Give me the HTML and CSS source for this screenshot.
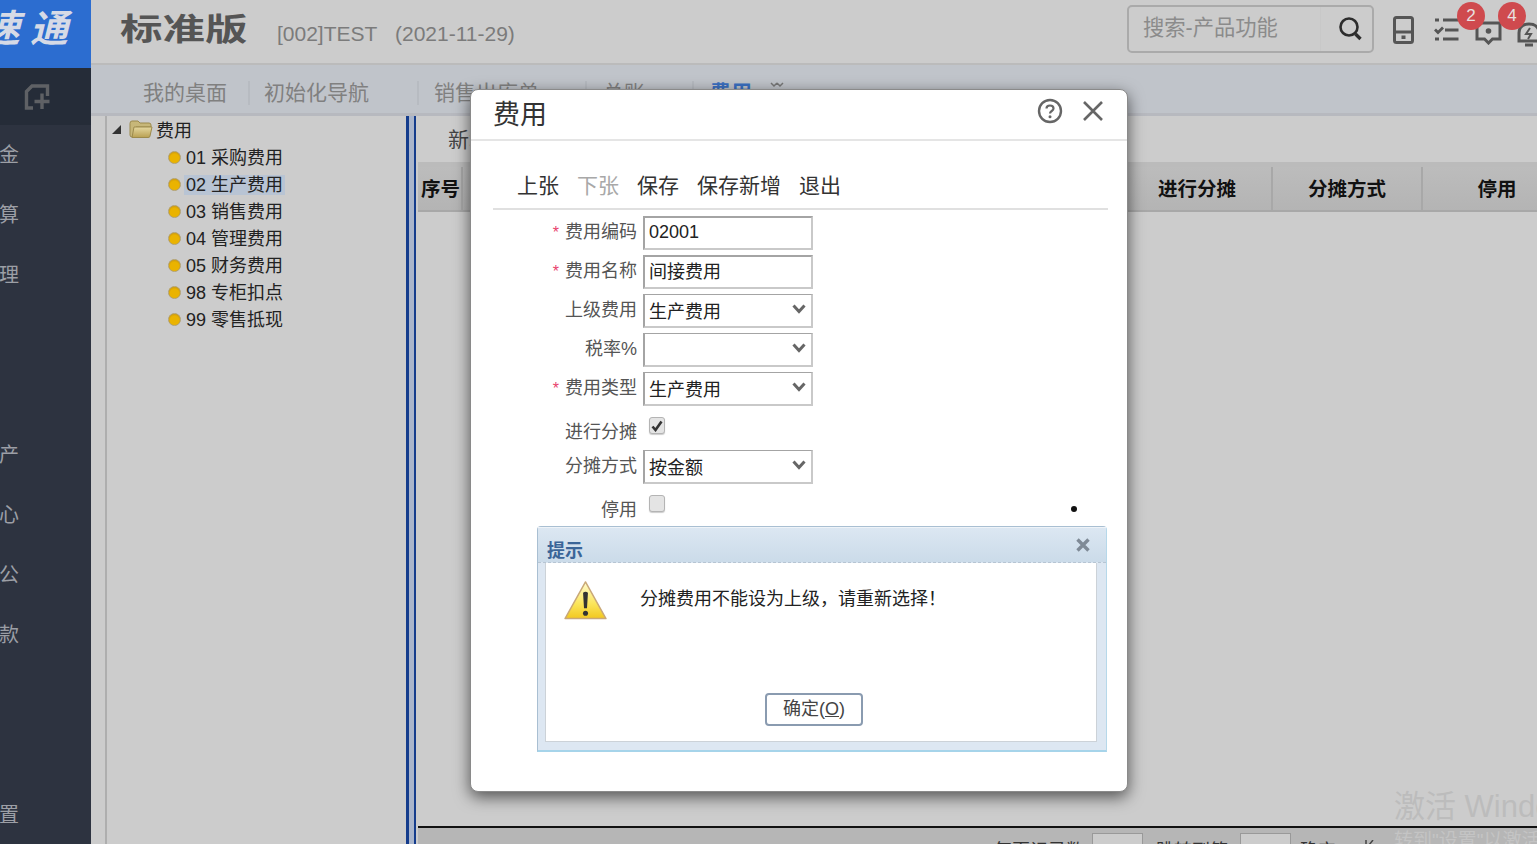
FILE: index.html
```html
<!DOCTYPE html>
<html lang="zh-CN">
<head>
<meta charset="utf-8">
<title>费用</title>
<link rel="stylesheet" href="styles.css">
</head>
<body>
<div class="app">
  <aside class="sidebar">
    <div class="logo"><span class="logo-text">速通</span></div>
    <div class="add-band">
      <svg class="add-icon" width="26" height="26" viewBox="0 0 26 26" fill="none" stroke="#5f6165" stroke-width="3.4">
        <path d="M9 24H2.500V7.500L8 2H23.500V12"/><path d="M18 9.500V25M10.500 17.500H25.500"/>
      </svg>
    </div>
    <nav class="nav">
      <div class="nav-item">金</div>
      <div class="nav-item">算</div>
      <div class="nav-item">理</div>
      <div class="nav-item"></div>
      <div class="nav-item"></div>
      <div class="nav-item">产</div>
      <div class="nav-item">心</div>
      <div class="nav-item">公</div>
      <div class="nav-item">款</div>
      <div class="nav-item"></div>
      <div class="nav-item"></div>
      <div class="nav-item">置</div>
    </nav>
  </aside>
  <div class="main">
    <header class="topbar">
      <div class="brand"><span class="brand-text">标准版</span></div>
      <div class="company">[002]TEST</div>
      <div class="date">(2021-11-29)</div>
      <div class="search">
        <div class="search-text">搜索-产品功能</div>
        <div class="search-btn">
          <svg width="28" height="28" viewBox="0 0 28 28" fill="none" stroke="#2d2d2d">
            <circle cx="12" cy="12" r="8.500" stroke-width="2.600"/><path d="M18.500 19l5 5" stroke-width="3.400"/>
          </svg>
        </div>
      </div>
      <div class="top-icons">
        <div class="top-icon">
          <svg width="21" height="28" viewBox="0 0 21 28" fill="none" stroke="#555" stroke-width="3">
            <rect x="1.500" y="1.500" width="18" height="25" rx="2"/><path d="M2 16H19"/><rect x="8.500" y="19.500" width="4" height="3.500" fill="#555" stroke="none"/>
          </svg>
        </div>
        <div class="top-icon">
          <svg width="25" height="26" viewBox="0 0 25 26" fill="none" stroke="#555" stroke-width="3">
            <path d="M1 4H5M9 4H24.500M11 14H24.500M1 23H5M9 23H24.500"/><path d="M1 13.500l3 3 5-5" stroke-width="2.800"/>
          </svg>
        </div>
        <div class="top-icon top-icon-low">
          <svg width="27" height="24" viewBox="0 0 27 24" fill="none" stroke="#555" stroke-width="3">
            <path d="M2 2H25V18H17.500L13.500 22 9.500 18H2Z"/><circle cx="13.500" cy="10" r="2.800" fill="#555" stroke="none"/>
          </svg>
          <span class="badge">2</span>
        </div>
        <div class="top-icon top-icon-low">
          <svg width="26" height="30" viewBox="0 0 26 30" fill="none" stroke="#555" stroke-width="3">
            <path d="M3 20V12C3 6 7 3 13 3S23 6 23 12V20ZM9 24H17"/><path d="M14 7l-4 6h5l-3 5" stroke-width="2"/>
          </svg>
          <span class="badge">4</span>
        </div>
      </div>
    </header>
    <div class="tabs">
      <div class="tab">我的桌面</div>
      <div class="tab">初始化导航</div>
      <div class="tab">销售出库单</div>
      <div class="tab">总账</div>
      <div class="tab tab-active">费用</div>
      <div class="tab-more">
        <svg width="14" height="8" viewBox="0 0 14 8" fill="none" stroke="#777" stroke-width="1.500"><path d="M1 1l3 3 3-3M7 1l3 3 3-3"/></svg>
      </div>
    </div>
    <div class="workspace">
      <div class="tree">
        <div class="tree-root">
          <span class="tree-arrow"></span>
          <svg class="folder" width="24" height="20" viewBox="0 0 24 20">
            <defs><linearGradient id="fg" x1="0" y1="0" x2="0" y2="1"><stop offset="0" stop-color="#e5d8a0"/><stop offset="1" stop-color="#b9a052"/></linearGradient></defs>
            <path d="M1 4.500Q1 2 3 2H9L11 4H20Q22 4 22 6V8H7L4 18H3Q1 18 1 16Z" fill="#c7b779" stroke="#9c8a4c"/>
            <path d="M5 8H23L21 17Q21 18.500 19 18.500H3Z" fill="url(#fg)" stroke="#9c8a4c"/>
          </svg>
          <span>费用</span>
        </div>
        <div class="tree-item"><span class="dot"></span><span class="tree-label">01 采购费用</span></div>
        <div class="tree-item"><span class="dot"></span><span class="tree-label tree-selected">02 生产费用</span></div>
        <div class="tree-item"><span class="dot"></span><span class="tree-label">03 销售费用</span></div>
        <div class="tree-item"><span class="dot"></span><span class="tree-label">04 管理费用</span></div>
        <div class="tree-item"><span class="dot"></span><span class="tree-label">05 财务费用</span></div>
        <div class="tree-item"><span class="dot"></span><span class="tree-label">98 专柜扣点</span></div>
        <div class="tree-item"><span class="dot"></span><span class="tree-label">99 零售抵现</span></div>
      </div>
      <div class="splitter"></div>
      <div class="content">
        <div class="content-toolbar">新增</div>
        <div class="grid-head">
          <div class="cell cell-no">序号</div>
          <div class="cell cell-fill"></div>
          <div class="cell cell-col">进行分摊</div>
          <div class="cell cell-col">分摊方式</div>
          <div class="cell cell-col">停用</div>
        </div>
        <div class="grid-body"></div>
        <div class="pager">
          <span class="pager-label">每页记录数</span><span class="pager-input"></span>
          <span class="pager-label pager-jump">跳转到第</span><span class="pager-input"></span>
          <span class="pager-label pager-ok">确定</span>
          <svg class="pager-first" width="10" height="10" viewBox="0 0 10 10" fill="none" stroke="#444" stroke-width="1.500"><path d="M1 0V10M8 0L4 5"/></svg>
        </div>
      </div>
    </div>
  </div>
</div>

<div class="watermark">
  <div class="wm-title">激活 Windows</div>
  <div class="wm-sub">转到"设置"以激活 Windows。</div>
</div>

<section class="dialog">
  <div class="dialog-head">
    <div class="dialog-title">费用</div>
    <svg class="help-icon" width="26" height="26" viewBox="0 0 26 26" fill="none" stroke="#666">
      <circle cx="13" cy="13" r="11" stroke-width="2.400"/>
      <path d="M9.500 10.500C9.500 8.500 11 7.500 13 7.500S16.500 8.700 16.500 10.400C16.500 13 13 13 13 15.500" stroke-width="2.200"/>
      <circle cx="13" cy="18.800" r="1.500" fill="#666" stroke="none"/>
    </svg>
    <svg class="close-icon" width="22" height="22" viewBox="0 0 22 22" fill="none" stroke="#666" stroke-width="2.600"><path d="M2 2L20 20M20 2L2 20"/></svg>
  </div>
  <div class="dialog-tools">
    <span class="tool">上张</span>
    <span class="tool tool-off">下张</span>
    <span class="tool">保存</span>
    <span class="tool">保存新增</span>
    <span class="tool">退出</span>
  </div>
  <div class="form">
    <div class="label"><i class="req">*</i>费用编码</div>
    <div class="field">02001</div>
    <div class="label"><i class="req">*</i>费用名称</div>
    <div class="field field-low">间接费用</div>
    <div class="label">上级费用</div>
    <div class="field field-select">生产费用<span class="chev"><svg width="14" height="10" viewBox="0 0 14 10" fill="none" stroke="#666" stroke-width="3"><path d="M1.500 1.500L7 7.500L12.500 1.500"/></svg></span></div>
    <div class="label">税率%</div>
    <div class="field field-select"><span class="chev"><svg width="14" height="10" viewBox="0 0 14 10" fill="none" stroke="#666" stroke-width="3"><path d="M1.500 1.500L7 7.500L12.500 1.500"/></svg></span></div>
    <div class="label"><i class="req">*</i>费用类型</div>
    <div class="field field-select">生产费用<span class="chev"><svg width="14" height="10" viewBox="0 0 14 10" fill="none" stroke="#666" stroke-width="3"><path d="M1.500 1.500L7 7.500L12.500 1.500"/></svg></span></div>
    <div class="label label-tall">进行分摊</div>
    <div class="check-wrap"><span class="check"><svg width="12" height="12" viewBox="0 0 12 12" fill="none" stroke="#333" stroke-width="2.600"><path d="M1.500 6.500L4.500 10L10.500 1.500"/></svg></span></div>
    <div class="label">分摊方式</div>
    <div class="field field-select">按金额<span class="chev"><svg width="14" height="10" viewBox="0 0 14 10" fill="none" stroke="#666" stroke-width="3"><path d="M1.500 1.500L7 7.500L12.500 1.500"/></svg></span></div>
    <div class="label label-tall">停用</div>
    <div class="check-wrap"><span class="check"></span></div>
  </div>
  <span class="stray-dot"></span>
  <div class="msgbox">
    <div class="msg-head">
      <span class="msg-title">提示</span>
      <svg class="msg-close" width="14" height="14" viewBox="0 0 14 14" fill="none" stroke="#7f8a96" stroke-width="3.400"><path d="M1.500 1.500L12.500 12.500M12.500 1.500L1.500 12.500"/></svg>
    </div>
    <div class="msg-body">
      <div class="msg-row">
        <svg class="warn" width="43" height="39" viewBox="0 0 44 40">
          <defs><linearGradient id="wg" x1="0" y1="0" x2="0" y2="1"><stop offset="0" stop-color="#fffbd0"/><stop offset="0.600" stop-color="#fbe55a"/><stop offset="1" stop-color="#f2c81e"/></linearGradient></defs>
          <path d="M22 1L43 38.500H1Z" fill="url(#wg)" stroke="#c9a877" stroke-width="1.500" stroke-linejoin="round"/>
          <path d="M19.500 12Q22 10 24.500 12L23.500 28H20.500Z" fill="#333"/>
          <circle cx="22" cy="33" r="2.600" fill="#333"/>
        </svg>
        <div class="msg-text">分摊费用不能设为上级，请重新选择！</div>
      </div>
      <div class="msg-actions"><div class="msg-btn">确定(<u>O</u>)</div></div>
    </div>
  </div>
</section>
</body>
</html>
```
FILE: styles.css
```css
* { box-sizing: border-box; }
html, body { margin: 0; height: 100%; overflow: hidden; }
body {
  font-family: "Liberation Sans", "Noto Sans CJK SC", sans-serif;
  background: #ccc;
  color: #222;
  position: relative;
  width: 1537px;
  height: 844px;
}
.app { display: flex; width: 1537px; height: 844px; overflow: hidden; }

/* sidebar */
.sidebar { width: 91px; flex: none; background: #2d3340; display: flex; flex-direction: column; }
.logo { height: 68px; flex: none; background: #2c6dd0; display: flex; justify-content: flex-end; align-items: center; padding: 0 13px 11px 0; overflow: hidden; }
.logo-text { font-size: 38px; line-height: 50px; font-weight: 700; font-style: italic; color: #d6dae6; white-space: nowrap; letter-spacing: 10px; flex: none; }
.add-band { height: 57px; flex: none; background: #252c38; display: flex; align-items: center; padding-left: 24px; }
.nav { display: flex; flex-direction: column; }
.nav-item { width: 19px; height: 60px; line-height: 60px; font-size: 20px; color: #9c9fa6; display: flex; justify-content: flex-end; white-space: nowrap; }

/* main */
.main { flex: 1; min-width: 0; display: flex; flex-direction: column; }
.topbar { height: 65px; flex: none; display: flex; align-items: flex-start; padding-left: 29px; border-bottom: 2px solid #bbb; background: #ccc; }
.brand { flex: none; width: 128px; line-height: 60px; white-space: nowrap; }
.brand-text { display: inline-block; font-size: 31px; font-weight: 700; color: #555; transform: scaleX(1.37); transform-origin: left center; }
.company { flex: none; font-size: 21px; color: #7b7b7b; line-height: 68px; margin-left: 29px; width: 118px; }
.date { flex: none; font-size: 21px; color: #7b7b7b; line-height: 68px; width: 732px; }
.search { flex: none; width: 247px; height: 48px; margin-top: 5px; border: 2px solid #aaa; border-radius: 5px; display: flex; }
.search-text { width: 192px; padding-left: 14px; font-size: 21.3px; line-height: 42px; color: #8b8b8b; border-right: 1px solid #c8c8c8; white-space: nowrap; }
.search-btn { flex: 1; display: flex; align-items: center; padding-left: 16px; }
.top-icons { flex: none; display: flex; margin-left: 19px; margin-top: 16px; }
.top-icon { position: relative; width: 41px; height: 30px; flex: none; display: flex; align-items: flex-start; }
.top-icon-low { padding-top: 5px; }
.badge { position: absolute; left: -18px; top: -14px; width: 28px; height: 28px; border-radius: 50%; background: #cf4a4e; color: #e8e0e0; font-size: 17px; line-height: 28px; text-align: center; }

.tabs { height: 51px; flex: none; background: #c0c4ca; border-bottom: 3px solid #b7b9bf; display: flex; align-items: center; padding: 7px 0 0 52px; }
.tab { font-size: 21px; color: #808080; padding-right: 21px; margin-right: 14px; border-right: 2px solid #b7bbc1; line-height: 24px; white-space: nowrap; height: 24px; }
.tab:nth-child(2) { margin-right: 15px; padding-right: 48px; }
.tab:nth-child(3) { padding-right: 46px; margin-right: 16px; }
.tab:nth-child(4) { padding-right: 47px; margin-right: 16px; }
.tab-active { color: #3a6fc0; font-weight: 700; border-right: 0; padding-right: 18px; margin-right: 0; }
.tab-more { line-height: 0; margin-top: -14px; }

.workspace { flex: 1; min-height: 0; display: flex; }
.tree { width: 301px; margin-left: 14px; flex: none; border-left: 2px solid #aeaeae; padding: 0 0 0 1px; font-size: 18px; color: #222; }
.tree-root { display: flex; align-items: center; height: 26px; margin-bottom: 2px; }
.tree-arrow { width: 0; height: 0; border-style: solid; border-width: 0 0 9px 9px; border-color: transparent transparent #333 transparent; margin: 0 8px 0 4px; }
.folder { margin-right: 3px; flex: none; }
.tree-item { display: flex; align-items: center; height: 27px; padding-left: 60px; }
.dot { width: 13px; height: 13px; border-radius: 50%; flex: none; background: radial-gradient(circle at 50% 60%, #eab300 50%, #b98a18 100%); border: 1px solid #b3a06a; margin-right: 3px; }
.tree-label { padding: 0 2px; line-height: 20px; white-space: nowrap; }
.tree-selected { background: #b8c4d4; }
.splitter { width: 10px; flex: none; background: #a9b5cb; border-left: 3px solid #143c8c; border-right: 2px solid #143c8c; }
.content { flex: 1; min-width: 0; display: flex; flex-direction: column; margin-left: 2px; }
.content-toolbar { height: 46px; flex: none; padding: 9px 0 0 30px; font-size: 21px; line-height: 30px; color: #444; }
.grid-head { height: 50px; flex: none; display: flex; border-top: 5px solid #bbb; border-bottom: 2px solid #a8a8a8; background: linear-gradient(#bcbcbc, #b4b4b4); padding-left: 2px; }
.cell { font-size: 19.5px; font-weight: 700; color: #111; text-align: center; line-height: 44px; border-right: 2px solid #a8a8a8; flex: none; white-space: nowrap; }
.cell-no { width: 43px; }
.cell-fill { width: 660px; }
.cell-col { width: 150px; }
.grid-body { flex: 1; min-height: 0; }
.pager { height: 18px; flex: none; background: #b6b6b6; border-top: 2px solid #111; display: flex; align-items: flex-start; padding-left: 576px; font-size: 18px; color: #333; white-space: nowrap; overflow: hidden; }
.pager-label { flex: none; line-height: 26px; margin-top: 10px; }
.pager-input { flex: none; width: 51px; height: 30px; margin: 5px 0 0 8px; background: #ccc; border: 1px solid #999; }
.pager-jump { margin-left: 13px; margin-right: 4px; }
.pager-ok { margin-left: 9px; }
.pager-first { flex: none; margin: 12px 0 0 29px; }

.watermark { position: absolute; left: 1394px; top: 786px; white-space: nowrap; color: #bcbcbc; pointer-events: none; }
.wm-title { font-size: 31px; line-height: 42px; }
.wm-sub { font-size: 19px; line-height: 26px; color: #c4c4c4; }

/* dialog */
.dialog { position: absolute; left: 470px; top: 89px; width: 658px; height: 703px; background: #fff; border: 1px solid #8a8a8a; border-radius: 8px; box-shadow: 0 5px 16px rgba(0,0,0,.6); }
.dialog-head { height: 51px; border-bottom: 2px solid #e5e5e5; display: flex; align-items: center; padding: 0 23px 0 22px; }
.dialog-title { font-size: 27px; color: #333; flex: 1; line-height: 50px; }
.help-icon { margin: -7px 16px 0 0; }
.close-icon { margin: -8px 0 0 3px; }
.dialog-tools { margin: 0 19px 0 22px; height: 69px; border-bottom: 2px solid #e0e0e0; display: flex; align-items: flex-end; padding: 0 0 7px 24px; gap: 18px; font-size: 21px; color: #333; }
.tool { line-height: 30px; }
.tool-off { color: #a8a8a8; }
.form { display: grid; grid-template-columns: 166px 170px; column-gap: 6px; row-gap: 5px; grid-template-rows: repeat(8, 34px); margin-top: 6px; }
.label { font-size: 18px; color: #555; text-align: right; line-height: 32px; white-space: nowrap; }
.label-tall { line-height: 42px; }
.req { color: #e8436c; font-style: normal; font-size: 16px; margin-right: 6px; }
.field { position: relative; height: 34px; border: 2px solid #c9c9c9; border-top-color: #a4a4a4; border-left-color: #a4a4a4; font-size: 18px; line-height: 29px; padding-left: 4px; color: #222; white-space: nowrap; }
.field-low { line-height: 30px; }
.field-select { border-top-width: 1px; line-height: 35px; }
.chev { position: absolute; right: 0; top: 0; bottom: 0; width: 25px; display: flex; align-items: flex-start; justify-content: center; padding-top: 9px; }
.check-wrap { padding: 6px 0 0 6px; }
.check { width: 16px; height: 17px; border-radius: 3px; background: #e4e4e4; border: 1px solid #b4b4b4; box-shadow: 0 1px 1px #ccc; display: flex; align-items: center; justify-content: center; }
.stray-dot { position: absolute; left: 600px; top: 416px; width: 6px; height: 6px; background: #111; border-radius: 50%; }

/* message box */
.msgbox { position: absolute; left: 66px; top: 436px; width: 570px; height: 226px; background: #dde7f2; border: 1px solid #a9bfd2; border-bottom: 2px solid #a6d4ea; border-right-color: #b6d8ea; border-radius: 4px 4px 0 0; display: flex; flex-direction: column; padding: 0 9px 8px 7px; }
.msg-head { height: 36px; flex: none; margin: 0 -9px 0 -7px; padding: 0 16px 0 9px; display: flex; align-items: flex-start; justify-content: space-between; background: linear-gradient(#dce7f2, #cbdbe9); border-bottom: 1px dashed #b7c5d3; border-top: 1px solid #eef3f8; }
.msg-title { font-size: 18px; font-weight: 700; color: #3b6598; line-height: 22px; margin-top: 12px; }
.msg-close { margin-top: 10px; }
.msg-body { flex: 1; min-height: 0; background: #fff; border: 1px solid #ccd2d8; border-top: 0; display: flex; flex-direction: column; }
.msg-row { display: flex; align-items: flex-start; height: 130px; padding: 18px 0 0 18px; }
.warn { flex: none; }
.msg-text { font-size: 18px; line-height: 30px; color: #222; margin: 3px 0 0 33px; white-space: nowrap; }
.msg-actions { display: flex; padding-left: 219px; }
.msg-btn { width: 98px; height: 33px; border: 2px solid #8a9bb0; border-radius: 4px; text-align: center; font-size: 18px; line-height: 29px; color: #444; background: #fff; white-space: nowrap; }
```
